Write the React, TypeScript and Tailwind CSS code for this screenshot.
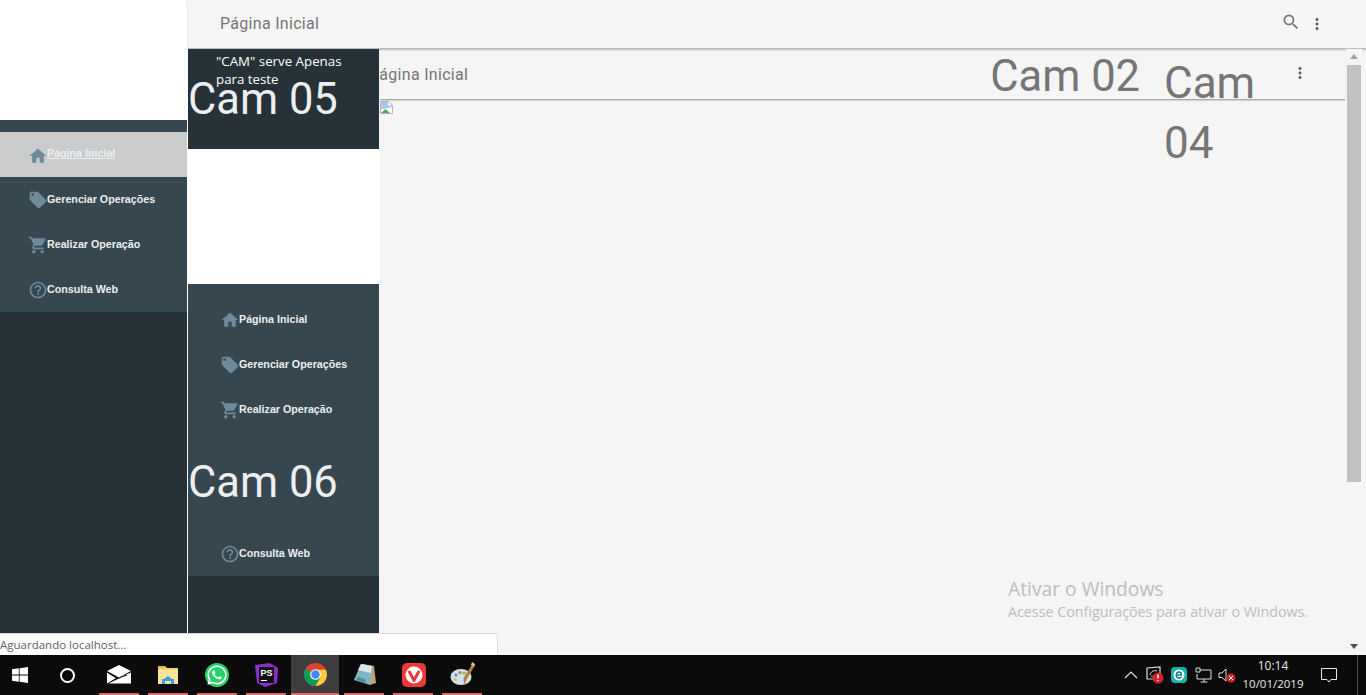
import React from "react";
import { MdHome, MdLocalOffer, MdShoppingCart, MdHelpOutline, MdSearch, MdMoreVert } from "react-icons/md";
import { FaWhatsapp } from "react-icons/fa";

function NavItem({ icon, label, active, pad }: { icon: React.ReactNode; label: string; active?: boolean; pad: "a" | "b" }) {
  return (
    <div className={`flex h-[45px] items-center ${pad === "a" ? "pl-[28px]" : "pl-[32px]"} ${active ? "bg-[#c9cbcd]" : ""}`}>
      <span className={`w-[19px] shrink-0 text-[#6f8a98] ${active ? "mt-[3px]" : "mt-[1px]"}`}>{icon}</span>
      <span className={`font-['Liberation_Sans',sans-serif] text-[10.7px] font-bold text-[#eceff1] ${active ? "-mt-[3px] underline" : "-mt-[1px]"}`}>{label}</span>
    </div>
  );
}

const home = <MdHome size={20} />;
const tag = <MdLocalOffer size={20} />;
const cart = <MdShoppingCart size={20} />;
const help = <MdHelpOutline size={20} />;

function CamTitle({ children, className = "" }: { children: React.ReactNode; className?: string }) {
  return <div className={`font-['Roboto',sans-serif] text-[43.5px] leading-[52px] ${className}`}>{children}</div>;
}

function Win() {
  return (
    <svg width="16" height="16" viewBox="0 0 16 16" fill="#fff">
      <path d="M0 2.3 6.8 1.3V7.5H0ZM7.6 1.2 16 0V7.5H7.6ZM0 8.4H6.8V14.7L0 13.7ZM7.6 8.4H16V16L7.6 14.8Z" />
    </svg>
  );
}

function Mail() {
  return (
    <svg width="24" height="19" viewBox="0 0 24 19">
      <path d="M0 6 12 0 24 6 12 12.5Z" fill="#fff" />
      <path d="M0 7.5 9 13 0 18.5ZM24 7.5V18.5H1.5L14 12.5 10 13.5Z" fill="#fff" />
      <path d="M0 7 10.5 13.5 20 10" stroke="#0b0b0b" strokeWidth="1" fill="none" />
    </svg>
  );
}

function Folder() {
  return (
    <svg width="22" height="20" viewBox="0 0 22 20">
      <path d="M1 1h7l2 2h11v16H1Z" fill="#f5d26b" />
      <path d="M1 5h20v14H1Z" fill="#fbe39a" />
      <path d="M1 1h7v2H1Z" fill="#e6bb4e" />
      <path d="M5 19v-5h2l4-3 4 3h2v5Z" fill="#3aa3e0" />
      <path d="M8 19v-3h6v3Z" fill="#fbe39a" />
    </svg>
  );
}

function PS() {
  return (
    <svg width="24" height="24" viewBox="0 0 24 24">
      <path d="M1 2 16 0 24 5 23 20 11 24 3 20Z" fill="#8b2fc9" />
      <path d="M5 4H20V20H5Z" fill="#111" />
      <text x="6.5" y="13" fontSize="9" fontWeight="700" fill="#fff" fontFamily="Liberation Sans, sans-serif">PS</text>
      <path d="M7 17h6v1H7Z" fill="#fff" />
    </svg>
  );
}

function Chrome() {
  return (
    <svg width="23" height="23" viewBox="0 0 24 24">
      <circle cx="12" cy="12" r="12" fill="#db4437" />
      <path d="M12 12 1.6 6A12 12 0 0 0 12 24l5-7Z" fill="#0f9d58" />
      <path d="M12 7h10.8A12 12 0 0 1 12 24l5.2-9Z" fill="#ffcd40" />
      <circle cx="12" cy="12" r="5.6" fill="#fff" />
      <circle cx="12" cy="12" r="4.4" fill="#4285f4" />
    </svg>
  );
}

function Notepad() {
  return (
    <svg width="24" height="24" viewBox="0 0 24 24">
      <path d="M9 1 21 3 23 20 17 22Z" fill="#b9a678" />
      <path d="M8 1 19 3 17 22 1 17Z" fill="#7fb8c2" />
      <path d="M8 1 19 3 18 10 5 7Z" fill="#d6e8ea" />
      <path d="M5 14 12 16 13 20 3 17Z" fill="#4f8d99" />
    </svg>
  );
}

function Vivaldi() {
  return (
    <svg width="24" height="24" viewBox="0 0 24 24">
      <rect width="24" height="24" rx="5" fill="#ef3939" />
      <circle cx="12" cy="12" r="8.5" fill="#fff" />
      <path d="M7.5 9 12 17.5 16.5 9" fill="none" stroke="#ef3939" strokeWidth="3" strokeLinecap="round" strokeLinejoin="round" />
    </svg>
  );
}

function Palette() {
  return (
    <svg width="26" height="26" viewBox="0 0 26 26">
      <ellipse cx="11" cy="15" rx="10.5" ry="8" fill="#cfe3ee" />
      <circle cx="6" cy="13" r="1.6" fill="#4a90d0" />
      <circle cx="10" cy="10.5" r="1.6" fill="#e35b5b" />
      <circle cx="14" cy="11" r="1.6" fill="#6cbf5a" />
      <circle cx="5.5" cy="17.5" r="1.6" fill="#e3c23c" />
      <path d="M23 1 25 3 17 17 14 23 13.5 16Z" fill="#b9803a" />
      <path d="M22 0 25 2 24 5 21 3Z" fill="#e8c27a" />
    </svg>
  );
}

function TaskItem({ children, active }: { children: React.ReactNode; active?: boolean }) {
  return (
    <div className="relative flex h-[40px] w-[49px] shrink-0 items-center justify-center">
      {active && <div className="absolute inset-y-0 left-0 w-[48px] bg-[#3e3e3e]" />}
      <div className="relative -mt-[1px] flex items-center justify-center">{children}</div>
      <div className={`absolute bottom-0 h-[2px] bg-[#e0686c] ${active ? "left-0 w-[48px]" : "left-[4px] w-[40px]"}`} />
    </div>
  );
}

function BrokenImage() {
  return (
    <svg width="13" height="13" viewBox="0 0 13 13" className="mt-[1px] block">
      <path d="M0.5 0.5H8.5L12.5 4.5V12.5H0.5Z" fill="#fff" stroke="#b5b5b5" />
      <path d="M1 1H8V4.5H12V6L1 8.5Z" fill="#a9c4f0" />
      <path d="M1 12 5.5 8 10 12Z" fill="#4fa84f" />
    </svg>
  );
}

export default function App() {
  return (
    <div className="flex h-[695px] w-full flex-col overflow-hidden bg-white">
      <div className="relative flex h-[655px] shrink-0">
        {/* first sidebar */}
        <aside className="flex h-full w-[187px] shrink-0 flex-col bg-[#263238]">
          <div className="h-[120px] shrink-0 bg-white" />
          <div className="shrink-0 bg-[#37474f] pt-[12px]">
            <NavItem pad="a" icon={home} label="Página Inicial" active />
            <NavItem pad="a" icon={tag} label="Gerenciar Operações" />
            <NavItem pad="a" icon={cart} label="Realizar Operação" />
            <NavItem pad="a" icon={help} label="Consulta Web" />
          </div>
        </aside>

        <div className="ml-[1px] flex min-w-0 flex-1 flex-col bg-[#f5f5f5]">
          {/* top bar */}
          <header className="flex h-[49px] shrink-0 items-center border-b border-[#bdbdbd] pl-[32px] pr-[40px] shadow-[0_1px_2px_rgba(0,0,0,0.25)]">
            <span className="font-['Roboto',sans-serif] text-[16px] tracking-[0.3px] text-[#757575]">Página Inicial</span>
            <MdSearch size={20} className="ml-auto -mt-[5px] text-[#757575]" />
            <MdMoreVert size={18} className="ml-[7px] -mt-[1px] text-[#616161]" />
          </header>

          <div className="flex min-h-0 flex-1">
            {/* second sidebar */}
            <aside className="relative z-10 flex w-[191px] shrink-0 flex-col bg-[#263238]">
              <div className="h-[100px] shrink-0 overflow-visible text-[#eceff1]">
                <p className="ml-[28px] w-[150px] pt-[3px] font-['Open_Sans',sans-serif] text-[13.3px] leading-[18px] text-white">"CAM" serve Apenas para teste</p>
                <CamTitle className="relative -mt-[14px]">Cam 05</CamTitle>
              </div>
              <div className="h-[135px] w-[192px] shrink-0 bg-white" />
              <div className="bg-[#37474f] pt-[13px]">
                <NavItem pad="b" icon={home} label="Página Inicial" />
                <NavItem pad="b" icon={tag} label="Gerenciar Operações" />
                <NavItem pad="b" icon={cart} label="Realizar Operação" />
                <div className="flex h-[99px] items-center pt-[2px] text-[#eceff1]">
                  <CamTitle>Cam 06</CamTitle>
                </div>
                <NavItem pad="b" icon={help} label="Consulta Web" />
              </div>
            </aside>

            {/* main */}
            <main className="relative ml-[1px] flex min-w-0 flex-1">
              <div className="min-w-0 flex-1">
                <div className="mr-[1px] flex h-[51px] items-start border-b border-[#a9a9a9] shadow-[0_1px_1px_rgba(0,0,0,0.12)]">
                  <span className="-ml-[11px] mt-[14px] shrink-0 font-['Roboto',sans-serif] text-[16px] tracking-[0.3px] text-[#757575]">Página Inicial</span>
                  <CamTitle className="ml-[522px] mt-[2px] shrink-0 text-[#757575]">Cam 02</CamTitle>
                  <div className="ml-[24px] mt-[4px] w-[105px] shrink-0 font-['Roboto',sans-serif] text-[44px] leading-[60px] text-[#757575]">Cam 04</div>
                  <MdMoreVert size={18} className="ml-[22px] mt-[15px] shrink-0 text-[#616161]" />
                </div>
                <BrokenImage />
              </div>
              {/* scrollbar */}
              <div className="mr-[4px] flex w-[16px] shrink-0 flex-col items-center bg-[#f5f5f5]">
                <div className="mt-[5px] h-0 w-0 border-x-[4px] border-b-[5px] border-x-transparent border-b-[#a3a3a3]" />
                <div className="mt-[6px] h-[417px] w-[14px] bg-[#c1c1c1]" />
                <div className="mb-[6px] mt-auto h-0 w-0 border-x-[4px] border-t-[5px] border-x-transparent border-t-[#505050]" />
              </div>
              {/* activation watermark */}
              <div className="pointer-events-none absolute left-[628px] top-[528px] font-['Open_Sans',sans-serif] text-[#bdbdbd]">
                <div className="text-[19.25px] leading-[24px]">Ativar o Windows</div>
                <div className="text-[14.28px] leading-[22px]">Acesse Configurações para ativar o Windows.</div>
              </div>
            </main>
          </div>
        </div>

        {/* browser status bubble */}
        <div className="absolute bottom-0 left-0 z-20 flex h-[22px] w-[498px] items-center rounded-tr-[4px] border-r border-t border-[#dcdcdc] bg-white font-['Open_Sans',sans-serif] text-[11.5px] text-[#5f6368]">
          Aguardando localhost...
        </div>
      </div>

      {/* taskbar */}
      <footer className="relative flex h-[40px] shrink-0 items-center bg-[#0b0b0b]">
        <div className="flex w-[40px] shrink-0 justify-center"><Win /></div>
        <div className="flex w-[55px] shrink-0 justify-center pr-[1px]">
          <div className="h-[15px] w-[15px] rounded-full border-[2px] border-white" />
        </div>
        <TaskItem><div className="-ml-[1px]"><Mail /></div></TaskItem>
        <TaskItem><div className="-ml-[2px]"><Folder /></div></TaskItem>
        <TaskItem><div className="-ml-[2px] flex h-[24px] w-[24px] items-center justify-center rounded-full bg-[#25d366] text-white"><FaWhatsapp size={22} /></div></TaskItem>
        <TaskItem><div className="-ml-[2px]"><PS /></div></TaskItem>
        <TaskItem active><div className="-ml-[1px]"><Chrome /></div></TaskItem>
        <TaskItem><Notepad /></TaskItem>
        <TaskItem><Vivaldi /></TaskItem>
        <TaskItem><Palette /></TaskItem>

        <div className="ml-[637px] flex shrink-0 items-center">
          <svg width="14" height="8" viewBox="0 0 14 8" className="mr-[7px] shrink-0"><path d="M1 7 7 1 13 7" fill="none" stroke="#ddd" strokeWidth="1.2" /></svg>
          <svg width="20" height="18" viewBox="0 0 20 18" className="mr-[6px] shrink-0">
            <path d="M2 2 15 1V13H2Z" fill="none" stroke="#ddd" strokeWidth="1.2" />
            <path d="M5 9c1-4 4-5 7-4M12 7c-1 3-4 4-6 3" fill="none" stroke="#ddd" />
            <circle cx="13" cy="12" r="5.5" fill="#d3222a" />
            <path d="M13 8.5v4M13 14v1" stroke="#fff" strokeWidth="1.4" />
          </svg>
          <svg width="16" height="17" viewBox="0 0 16 17" className="mr-[8px] shrink-0">
            <rect width="16" height="16" rx="4" fill="#11b4ac" />
            <circle cx="8" cy="8" r="5.5" fill="#fff" />
            <path d="M5.2 8h5.4C10.6 5.8 9.4 5 8 5S5.2 6.3 5.2 8.2 6.5 11 8 11c1 0 1.8-.3 2.4-1" fill="none" stroke="#0a7f7a" strokeWidth="1.3" />
          </svg>
          <svg width="17" height="16" viewBox="0 0 17 16" className="mr-[6px] shrink-0">
            <path d="M4 3H16V12H2V7M9 12V15M5.5 15H12.5" fill="none" stroke="#ddd" />
            <path d="M1 1H5V5H1Z" fill="#0b0b0b" stroke="#ddd" />
          </svg>
          <svg width="18" height="15" viewBox="0 0 18 15" className="mr-[7px] shrink-0">
            <path d="M1 5H4L8 1V13L4 9.5H1Z" fill="none" stroke="#ddd" />
            <circle cx="13" cy="10" r="4.5" fill="#d3222a" />
            <path d="M11 8 15 12M15 8 11 12" stroke="#fff" />
          </svg>
          <div className="flex w-[60px] shrink-0 flex-col items-center font-['Open_Sans',sans-serif] text-[12px] leading-[18px] text-[#e8e8e8]">
            <span>10:14</span>
            <span className="whitespace-nowrap text-[11.5px]">10/01/2019</span>
          </div>
          <svg width="16" height="15" viewBox="0 0 16 15" className="ml-[18px] shrink-0">
            <path d="M0.5 0.5H15.5V11.5H10L8 14 6 11.5H0.5Z" fill="none" stroke="#e8e8e8" />
          </svg>
          <div className="ml-[20px] h-[40px] w-[1px] shrink-0 bg-[#4a4a4a]" />
        </div>
      </footer>
    </div>
  );
}
